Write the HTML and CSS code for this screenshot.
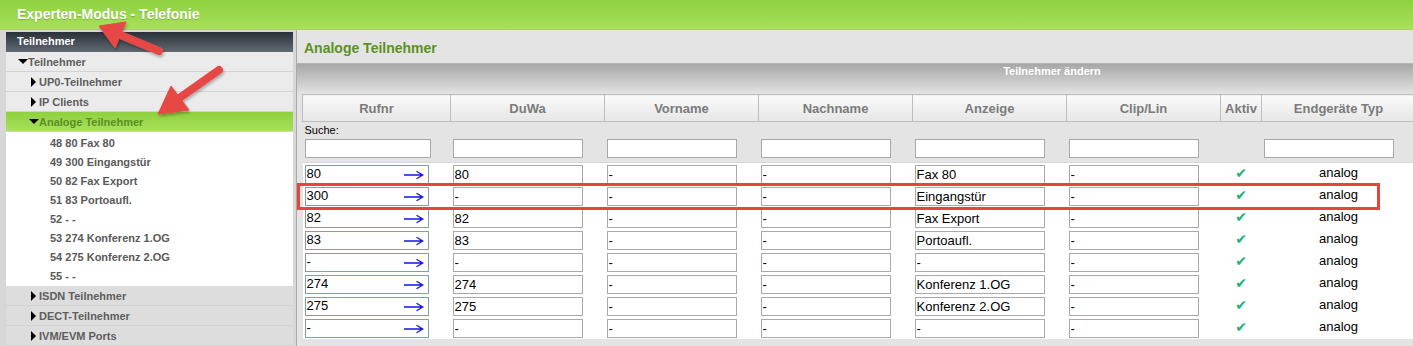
FILE: index.html
```html
<!DOCTYPE html>
<html lang="de">
<head>
    <meta charset="UTF-8">
    <meta name="viewport" content="width=device-width, initial-scale=1.0">
    <title>Experten-Modus - Telefonie</title>
    <link rel="stylesheet" href="styles.css">
</head>
<body>
    <div class="topbar">Experten-Modus - Telefonie</div>

    <div class="layout">
        <!-- Navigation links -->
        <nav class="sidebar">
            <div class="side-head">Teilnehmer</div>
            <ul class="side-menu">
                <li class="item lvl1"><span class="tri down"></span>Teilnehmer</li>
                <li class="item lvl2"><span class="tri right"></span>UP0-Teilnehmer</li>
                <li class="item lvl2"><span class="tri right"></span>IP Clients</li>
                <li class="item lvl2 active"><span class="tri down"></span>Analoge Teilnehmer</li>
                <li>
                    <ul class="sub">
                        <li>48 80 Fax 80</li>
                        <li>49 300 Eingangstür</li>
                        <li>50 82 Fax Export</li>
                        <li>51 83 Portoaufl.</li>
                        <li>52 - -</li>
                        <li>53 274 Konferenz 1.OG</li>
                        <li>54 275 Konferenz 2.OG</li>
                        <li>55 - -</li>
                    </ul>
                </li>
                <li class="item lvl2 dim"><span class="tri right"></span>ISDN Teilnehmer</li>
                <li class="item lvl2 dim"><span class="tri right"></span>DECT-Teilnehmer</li>
                <li class="item lvl2 dim"><span class="tri right"></span>IVM/EVM Ports</li>
            </ul>
        </nav>

        <!-- Inhalt -->
        <main class="main">
            <h2 class="page-title">Analoge Teilnehmer</h2>
            <div class="band">Teilnehmer ändern</div>

            <table class="grid">
                <colgroup>
                    <col style="width:148px">
                    <col style="width:154px">
                    <col style="width:154px">
                    <col style="width:154px">
                    <col style="width:154px">
                    <col style="width:154px">
                    <col style="width:41px">
                    <col style="width:154px">
                </colgroup>
                <thead>
                    <tr>
                        <th>Rufnr</th>
                        <th>DuWa</th>
                        <th>Vorname</th>
                        <th>Nachname</th>
                        <th>Anzeige</th>
                        <th>Clip/Lin</th>
                        <th>Aktiv</th>
                        <th>Endgeräte Typ</th>
                    </tr>
                </thead>
                <tbody class="search">
                    <tr><td class="search-label" colspan="8">Suche:</td></tr>
                    <tr class="search-row">
                        <td><input class="fld first" type="text"></td>
                        <td><input class="fld" type="text"></td>
                        <td><input class="fld" type="text"></td>
                        <td><input class="fld" type="text"></td>
                        <td><input class="fld" type="text"></td>
                        <td><input class="fld" type="text"></td>
                        <td></td>
                        <td><input class="fld" type="text"></td>
                    </tr>
                </tbody>
                <tbody class="rows">
                    <tr>
                        <td><div class="rufnr"><span>80</span><svg class="go" viewBox="0 0 20 10"><path d="M0 5H18.5M12.5 1.2L18.8 5L12.5 8.8"/></svg></div></td>
                        <td><input class="fld" value="80"></td>
                        <td><input class="fld" value="-"></td>
                        <td><input class="fld" value="-"></td>
                        <td><input class="fld" value="Fax 80"></td>
                        <td><input class="fld" value="-"></td>
                        <td class="ok">&#10004;</td>
                        <td class="type">analog</td>
                    </tr>
                    <tr>
                        <td><div class="rufnr"><span>300</span><svg class="go" viewBox="0 0 20 10"><path d="M0 5H18.5M12.5 1.2L18.8 5L12.5 8.8"/></svg></div></td>
                        <td><input class="fld" value="-"></td>
                        <td><input class="fld" value="-"></td>
                        <td><input class="fld" value="-"></td>
                        <td><input class="fld" value="Eingangstür"></td>
                        <td><input class="fld" value="-"></td>
                        <td class="ok">&#10004;</td>
                        <td class="type">analog</td>
                    </tr>
                    <tr>
                        <td><div class="rufnr"><span>82</span><svg class="go" viewBox="0 0 20 10"><path d="M0 5H18.5M12.5 1.2L18.8 5L12.5 8.8"/></svg></div></td>
                        <td><input class="fld" value="82"></td>
                        <td><input class="fld" value="-"></td>
                        <td><input class="fld" value="-"></td>
                        <td><input class="fld" value="Fax Export"></td>
                        <td><input class="fld" value="-"></td>
                        <td class="ok">&#10004;</td>
                        <td class="type">analog</td>
                    </tr>
                    <tr>
                        <td><div class="rufnr"><span>83</span><svg class="go" viewBox="0 0 20 10"><path d="M0 5H18.5M12.5 1.2L18.8 5L12.5 8.8"/></svg></div></td>
                        <td><input class="fld" value="83"></td>
                        <td><input class="fld" value="-"></td>
                        <td><input class="fld" value="-"></td>
                        <td><input class="fld" value="Portoaufl."></td>
                        <td><input class="fld" value="-"></td>
                        <td class="ok">&#10004;</td>
                        <td class="type">analog</td>
                    </tr>
                    <tr>
                        <td><div class="rufnr"><span>-</span><svg class="go" viewBox="0 0 20 10"><path d="M0 5H18.5M12.5 1.2L18.8 5L12.5 8.8"/></svg></div></td>
                        <td><input class="fld" value="-"></td>
                        <td><input class="fld" value="-"></td>
                        <td><input class="fld" value="-"></td>
                        <td><input class="fld" value="-"></td>
                        <td><input class="fld" value="-"></td>
                        <td class="ok">&#10004;</td>
                        <td class="type">analog</td>
                    </tr>
                    <tr>
                        <td><div class="rufnr"><span>274</span><svg class="go" viewBox="0 0 20 10"><path d="M0 5H18.5M12.5 1.2L18.8 5L12.5 8.8"/></svg></div></td>
                        <td><input class="fld" value="274"></td>
                        <td><input class="fld" value="-"></td>
                        <td><input class="fld" value="-"></td>
                        <td><input class="fld" value="Konferenz 1.OG"></td>
                        <td><input class="fld" value="-"></td>
                        <td class="ok">&#10004;</td>
                        <td class="type">analog</td>
                    </tr>
                    <tr>
                        <td><div class="rufnr"><span>275</span><svg class="go" viewBox="0 0 20 10"><path d="M0 5H18.5M12.5 1.2L18.8 5L12.5 8.8"/></svg></div></td>
                        <td><input class="fld" value="275"></td>
                        <td><input class="fld" value="-"></td>
                        <td><input class="fld" value="-"></td>
                        <td><input class="fld" value="Konferenz 2.OG"></td>
                        <td><input class="fld" value="-"></td>
                        <td class="ok">&#10004;</td>
                        <td class="type">analog</td>
                    </tr>
                    <tr>
                        <td><div class="rufnr"><span>-</span><svg class="go" viewBox="0 0 20 10"><path d="M0 5H18.5M12.5 1.2L18.8 5L12.5 8.8"/></svg></div></td>
                        <td><input class="fld" value="-"></td>
                        <td><input class="fld" value="-"></td>
                        <td><input class="fld" value="-"></td>
                        <td><input class="fld" value="-"></td>
                        <td><input class="fld" value="-"></td>
                        <td class="ok">&#10004;</td>
                        <td class="type">analog</td>
                    </tr>
                </tbody>
            </table>
        </main>
    </div>

    <!-- Markierungen (Screenshot-Annotationen) -->
    <div class="mark-box"></div>
    <svg class="annot" width="1413" height="346" viewBox="0 0 1413 346">
        <defs>
            <filter id="shade" x="-20%" y="-20%" width="140%" height="140%">
                <feDropShadow dx="1" dy="2" stdDeviation="1.5" flood-color="#000" flood-opacity="0.3"/>
            </filter>
        </defs>
        <g filter="url(#shade)" fill="#e64a45" stroke="#e64a45">
            <line x1="118" y1="34" x2="159" y2="51" stroke-width="8" stroke-linecap="round"/>
            <polygon points="99,26 126,22 115,48" stroke-width="1" stroke-linejoin="round"/>
            <line x1="178" y1="99" x2="219" y2="70" stroke-width="8" stroke-linecap="round"/>
            <polygon points="158,114 171,86 189,110" stroke-width="1" stroke-linejoin="round"/>
        </g>
    </svg>
</body>
</html>
```

FILE: styles.css
```css
html, body {
    margin: 0;
    overflow: hidden;
}
body {
    position: relative;
    width: 1413px;
    height: 346px;
    font-family: "Liberation Sans", Arial, sans-serif;
    background-color: #d7d7d7;
}

/* Kopfleiste */
.topbar {
    height: 29px;
    line-height: 29px;
    padding-left: 17px;
    border-bottom: 1px solid #b9b9b9;
    background: linear-gradient(#8ed03e, #a8e15c);
    color: #fff;
    font-size: 14px;
    font-weight: bold;
    text-shadow: 0 1px 1px rgba(0, 0, 0, 0.2);
}

.layout {
    display: flex;
    align-items: flex-start;
}

/* Seitenleiste */
.sidebar {
    flex: none;
    width: 287px;
    margin: 2px 0 0 6px;
}
.side-head {
    height: 20px;
    line-height: 19px;
    padding-left: 11px;
    background: linear-gradient(#2b3139, #626972);
    color: #fff;
    font-size: 11px;
    font-weight: bold;
}
.side-menu,
.sub {
    list-style: none;
    margin: 0;
    padding: 0;
}
.item {
    display: flex;
    align-items: center;
    height: 19px;
    border-bottom: 1px solid #d3d3d3;
    background-color: #ebebeb;
    color: #5e5e5e;
    font-size: 11px;
    font-weight: bold;
}
.lvl1 {
    padding-left: 11px;
}
.lvl2 {
    padding-left: 22px;
}
.item.active {
    background: linear-gradient(#8ed03e, #a8e15c);
    color: #5a8f24;
}
.item.dim {
    background-color: #dddddd;
}
.tri {
    flex: none;
    display: flex;
    align-items: center;
    justify-content: center;
    width: 11px;
    height: 19px;
}
.tri::before {
    content: "";
    border-style: solid;
}
.tri.down::before {
    border-width: 5px 5px 0 5px;
    border-color: #000 transparent transparent transparent;
}
.tri.right::before {
    border-width: 5px 0 5px 5px;
    border-color: transparent transparent transparent #000;
}
.sub {
    padding-top: 2px;
    background-color: #fff;
}
.sub li {
    height: 19px;
    line-height: 19px;
    padding-left: 44px;
    color: #5a5a5a;
    font-size: 11px;
    font-weight: bold;
}

/* Hauptbereich */
.main {
    flex: 1;
    min-width: 0;
    height: 330px;
    margin-left: 3px;
    border-left: 1px solid #a9a9a9;
    background-color: #e4e4e4;
    overflow: hidden;
}
.page-title {
    margin: 0;
    height: 28px;
    line-height: 27px;
    padding: 5px 0 0 7px;
    border-bottom: 1px solid #b5b5b5;
    color: #5b9125;
    font-size: 14px;
}
.band {
    height: 30px;
    line-height: 15px;
    padding-left: 394px;
    background: linear-gradient(#a7a7a7, #e3e3e3);
    color: #fff;
    font-size: 11px;
    font-weight: bold;
    text-align: center;
}

.grid {
    width: 1113px;
    margin-left: 5px;
    border-collapse: collapse;
    table-layout: fixed;
}
.grid th {
    height: 26px;
    padding: 0;
    border: 1px solid #bdbdbd;
    background: linear-gradient(#fafafa, #e6e6e6);
    color: #7b7b7b;
    font-size: 13px;
    font-weight: bold;
}
.grid td {
    padding: 0 0 0 2px;
}
.search-label {
    height: 12px;
    line-height: 12px;
    padding-top: 2px !important;
    font-size: 11px;
    color: #000;
}
.search-row td {
    padding: 3px 0 4px 2px;
    border-bottom: 1px solid #d8d8d8;
}
.rows {
    background-color: #fff;
}
.rows td {
    height: 19px;
    padding: 2px 0 1px 2px;
}
.fld {
    display: block;
    box-sizing: border-box;
    width: 130px;
    height: 19px;
    margin: 0;
    padding: 0 1px;
    border: 1px solid #a9a9a9;
    background-color: #fff;
    color: #000;
    font-family: "Liberation Sans", Arial, sans-serif;
    font-size: 13px;
}
.fld.first {
    width: 126px;
}
.rufnr {
    display: flex;
    align-items: center;
    justify-content: space-between;
    box-sizing: border-box;
    width: 124px;
    height: 19px;
    padding: 0 4px 0 1px;
    border: 1px solid #7f9db9;
    background-color: #fff;
    color: #000;
    font-size: 13px;
}
.rufnr span {
    align-self: flex-start;
    line-height: 15px;
}
.go {
    width: 20px;
    height: 10px;
    fill: none;
    stroke: #1414e6;
    stroke-width: 1.3;
}
.rows td.ok {
    padding: 0 0 3px;
    text-align: center;
    vertical-align: middle;
    color: #1bb276;
    font-family: "DejaVu Sans", sans-serif;
    font-size: 14px;
    line-height: 14px;
}
.rows td.type {
    padding: 0 0 3px;
    text-align: center;
    vertical-align: middle;
    color: #000;
    font-size: 13px;
}

/* Annotationen */
.mark-box {
    position: absolute;
    left: 297px;
    top: 183px;
    width: 1083px;
    height: 27px;
    box-sizing: border-box;
    border: 3px solid #e3463f;
}
.annot {
    position: absolute;
    left: 0;
    top: 0;
    pointer-events: none;
}
```
